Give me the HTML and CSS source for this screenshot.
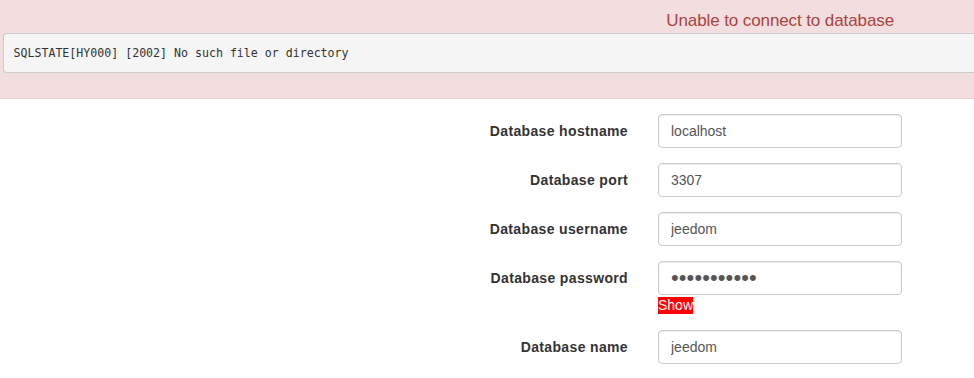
FILE: index.html
```html
<!DOCTYPE html>
<html lang="en">
<head>
    <meta charset="UTF-8">
    <meta name="viewport" content="width=device-width, initial-scale=1.0">
    <title>Jeedom installation</title>
    <link rel="stylesheet" href="styles.css">
</head>
<body>
    <div class="alert-danger">
        <div class="alert-title">Unable to connect to database</div>
        <pre class="error-detail">SQLSTATE[HY000] [2002] No such file or directory</pre>
    </div>

    <form class="db-form">
        <div class="form-row">
            <label for="hostname">Database hostname</label>
            <div class="field">
                <input type="text" id="hostname" value="localhost">
            </div>
        </div>

        <div class="form-row">
            <label for="port">Database port</label>
            <div class="field">
                <input type="text" id="port" value="3307">
            </div>
        </div>

        <div class="form-row">
            <label for="username">Database username</label>
            <div class="field">
                <input type="text" id="username" value="jeedom">
            </div>
        </div>

        <div class="form-row">
            <label for="password">Database password</label>
            <div class="field">
                <input type="password" id="password" class="password" value="jeedom12345">
                <span class="show-pass">Show</span>
            </div>
        </div>

        <div class="form-row">
            <label for="dbname">Database name</label>
            <div class="field">
                <input type="text" id="dbname" value="jeedom">
            </div>
        </div>
    </form>
</body>
</html>
```

FILE: styles.css
```css
body {
    margin: 0;
    overflow: hidden;
    font-family: 'Liberation Sans', Arial, sans-serif;
    font-size: 14px;
    color: #333333;
    background-color: #ffffff;
}
.alert-danger {
    padding: 11px 0 25px 3px;
    background-color: #f2dede;
    border-bottom: 1px solid #ebccd1;
}
.alert-title {
    padding-right: 80px;
    font-size: 17px;
    line-height: 20px;
    letter-spacing: -0.1px;
    text-align: right;
    color: #a94442;
}
.error-detail {
    margin: 2px 0 0 0;
    padding: 9.5px;
    font-family: 'DejaVu Sans Mono', monospace;
    font-size: 11.6px;
    line-height: 18.6px;
    color: #333333;
    background-color: #f5f5f5;
    border: 1px solid #cccccc;
    border-right: none;
    border-radius: 4px 0 0 4px;
}
.db-form {
    display: flex;
    flex-direction: column;
    gap: 15px;
    padding-top: 15px;
}
/* one label + input per row, label right aligned */
.form-row {
    display: flex;
    align-items: flex-start;
    gap: 30px;
}
.form-row label {
    width: 628px;
    padding-top: 9px;
    font-weight: bold;
    letter-spacing: 0.35px;
    text-align: right;
}
.field {
    display: flex;
    flex-direction: column;
    align-items: flex-start;
}
input {
    box-sizing: border-box;
    width: 244px;
    height: 34px;
    padding: 6px 12px;
    font-family: 'Liberation Sans', Arial, sans-serif;
    font-size: 14px;
    color: #555555;
    background-color: #ffffff;
    border: 1px solid #cccccc;
    border-radius: 4px;
    box-shadow: inset 0 1px 1px rgba(0, 0, 0, 0.075);
}
input.password {
    font-size: 22px;
    letter-spacing: 0.1px;
}
.show-pass {
    margin: 2px 0 1px 0;
    line-height: 17px;
    color: #ffffff;
    background-color: #ff0000;
}
```
